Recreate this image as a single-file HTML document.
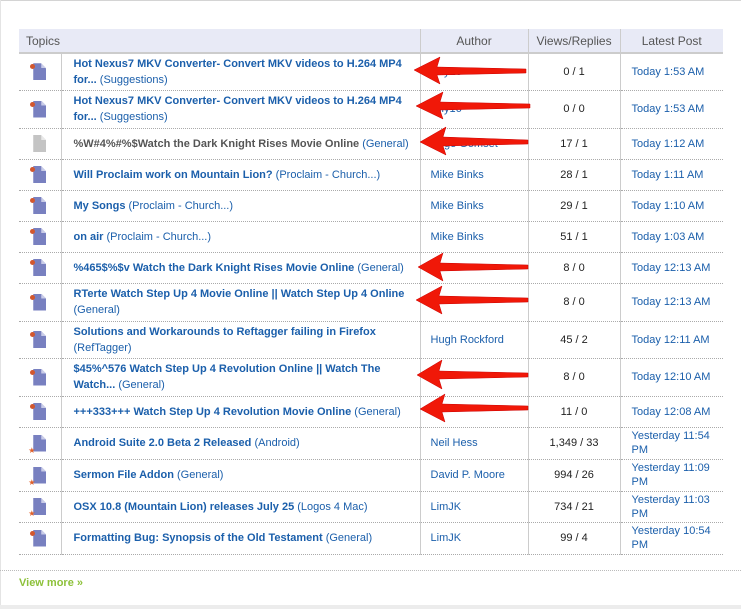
<!DOCTYPE html>
<html><head><style>
body{margin:0;background:#fff;font-family:"Liberation Sans",Arial,sans-serif;font-size:11px;width:741px;height:609px;position:relative;overflow:hidden}
.top{position:absolute;left:0;top:0;width:741px;height:1px;background:#d4d4d4}
.lft{position:absolute;left:0;top:0;width:1px;height:609px;background:#e4e4e4}
.bot{position:absolute;left:0;top:605px;width:741px;height:4px;background:#ececec}
table{position:absolute;left:19px;top:29px;border-collapse:collapse;width:704px;table-layout:fixed}
th{background:#e8eaf6;color:#555;font-weight:normal;font-size:12px;height:23px;border-left:1px solid #ccc;border-bottom:2px solid #ccc;padding:0}
td{border-bottom:1px dotted #aaa;padding:0;vertical-align:middle}
td.i{text-align:center;border-right:1px solid #ccc}
td.t{padding-left:12px;line-height:16px;color:#1b5fab;white-space:nowrap;overflow:hidden}
td.t b{color:#1b5fab}
td.a{padding-left:10px;color:#1b5fab;border-left:1px solid #ccc}
td.v{text-align:center;color:#222;border-left:1px solid #ccc;border-right:1px solid #ccc}
td.l{padding-left:11px;color:#1b5fab;line-height:14px}
.ic{display:inline-block;position:relative;width:13px;height:17px;vertical-align:middle}
.ic i{position:absolute;left:0;top:0;width:13px;height:17px;background:#7880c0;clip-path:polygon(0 0,60% 0,100% 32%,100% 100%,0 100%)}
.ic u{position:absolute;left:8px;top:0;width:5px;height:5px;background:#c9cce8;clip-path:polygon(0 0,100% 100%,0 100%)}
.ic.g i{background:#c4c4c4}
.ic.g u{background:#e8e8e8}
.ic .d{position:absolute;left:-3px;top:1px;width:5px;height:5px;border-radius:50%;background:#d2572e}
.ic .s{position:absolute;left:-5px;bottom:-3px;color:#e0602a;font-size:8px;line-height:8px}
.vm{position:absolute;left:19px;top:577px;color:#8dc13a;font-weight:bold;font-size:11px}
.dl{position:absolute;left:0;top:570px;width:741px;border-top:1px dotted #bbb}
svg{position:absolute;left:0;top:0}
</style></head><body>
<div class="top"></div><div class="lft"></div>
<table>
<colgroup><col style="width:42px"><col style="width:359px"><col style="width:108px"><col style="width:92px"><col style="width:103px"></colgroup>
<tr><th colspan="2" style="text-align:left;padding-left:7px;border-left:none">Topics</th><th>Author</th><th>Views/Replies</th><th>Latest Post</th></tr>
<tr style="height:37px"><td class="i"><span class="ic"><i></i><u></u><span class="d"></span></span></td><td class="t"><b>Hot Nexus7 MKV Converter- Convert MKV videos to H.264 MP4<br>for...</b> (Suggestions)</td><td class="a">Lilly16</td><td class="v">0 / 1</td><td class="l">Today 1:53 AM</td></tr>
<tr style="height:38px"><td class="i"><span class="ic"><i></i><u></u><span class="d"></span></span></td><td class="t"><b>Hot Nexus7 MKV Converter- Convert MKV videos to H.264 MP4<br>for...</b> (Suggestions)</td><td class="a">Lilly16</td><td class="v">0 / 0</td><td class="l">Today 1:53 AM</td></tr>
<tr style="height:31px"><td class="i"><span class="ic g"><i></i><u></u></span></td><td class="t"><b style="color:#555">%W#4%#%$Watch the Dark Knight Rises Movie Online</b> (General)</td><td class="a">Ange Gomset</td><td class="v">17 / 1</td><td class="l">Today 1:12 AM</td></tr>
<tr style="height:31px"><td class="i"><span class="ic"><i></i><u></u><span class="d"></span></span></td><td class="t"><b>Will Proclaim work on Mountain Lion?</b> (Proclaim - Church...)</td><td class="a">Mike Binks</td><td class="v">28 / 1</td><td class="l">Today 1:11 AM</td></tr>
<tr style="height:31px"><td class="i"><span class="ic"><i></i><u></u><span class="d"></span></span></td><td class="t"><b>My Songs</b> (Proclaim - Church...)</td><td class="a">Mike Binks</td><td class="v">29 / 1</td><td class="l">Today 1:10 AM</td></tr>
<tr style="height:31px"><td class="i"><span class="ic"><i></i><u></u><span class="d"></span></span></td><td class="t"><b>on air</b> (Proclaim - Church...)</td><td class="a">Mike Binks</td><td class="v">51 / 1</td><td class="l">Today 1:03 AM</td></tr>
<tr style="height:31px"><td class="i"><span class="ic"><i></i><u></u><span class="d"></span></span></td><td class="t"><b>%465$%$v Watch the Dark Knight Rises Movie Online</b> (General)</td><td class="a"></td><td class="v">8 / 0</td><td class="l">Today 12:13 AM</td></tr>
<tr style="height:38px"><td class="i"><span class="ic"><i></i><u></u><span class="d"></span></span></td><td class="t"><b>RTerte Watch Step Up 4 Movie Online || Watch Step Up 4 Online</b><br>(General)</td><td class="a"></td><td class="v">8 / 0</td><td class="l">Today 12:13 AM</td></tr>
<tr style="height:37px"><td class="i"><span class="ic"><i></i><u></u><span class="d"></span></span></td><td class="t"><b>Solutions and Workarounds to Reftagger failing in Firefox</b><br>(RefTagger)</td><td class="a">Hugh Rockford</td><td class="v">45 / 2</td><td class="l">Today 12:11 AM</td></tr>
<tr style="height:38px"><td class="i"><span class="ic"><i></i><u></u><span class="d"></span></span></td><td class="t"><b>$45%^576 Watch Step Up 4 Revolution Online || Watch The<br>Watch...</b> (General)</td><td class="a"></td><td class="v">8 / 0</td><td class="l">Today 12:10 AM</td></tr>
<tr style="height:31px"><td class="i"><span class="ic"><i></i><u></u><span class="d"></span></span></td><td class="t"><b>+++333+++ Watch Step Up 4 Revolution Movie Online</b> (General)</td><td class="a"></td><td class="v">11 / 0</td><td class="l">Today 12:08 AM</td></tr>
<tr style="height:32px"><td class="i"><span class="ic"><i></i><u></u><span class="s">★</span></span></td><td class="t"><b>Android Suite 2.0 Beta 2 Released</b> (Android)</td><td class="a">Neil Hess</td><td class="v">1,349 / 33</td><td class="l">Yesterday 11:54 PM</td></tr>
<tr style="height:32px"><td class="i"><span class="ic"><i></i><u></u><span class="s">★</span></span></td><td class="t"><b>Sermon File Addon</b> (General)</td><td class="a">David P. Moore</td><td class="v">994 / 26</td><td class="l">Yesterday 11:09 PM</td></tr>
<tr style="height:31px"><td class="i"><span class="ic"><i></i><u></u><span class="s">★</span></span></td><td class="t"><b>OSX 10.8 (Mountain Lion) releases July 25</b> (Logos 4 Mac)</td><td class="a">LimJK</td><td class="v">734 / 21</td><td class="l">Yesterday 11:03 PM</td></tr>
<tr style="height:32px"><td class="i"><span class="ic"><i></i><u></u><span class="d"></span></span></td><td class="t"><b>Formatting Bug: Synopsis of the Old Testament</b> (General)</td><td class="a">LimJK</td><td class="v">99 / 4</td><td class="l">Yesterday 10:54 PM</td></tr>
</table>
<div class="dl"></div>
<div class="vm">View more »</div>
<div class="bot"></div>
<svg width="741" height="609">
<g fill="#f01808" stroke="#c00" stroke-width="0.5">
<polygon points="414,70 440,57 437,67 526,69 526,73 437,75 440,84"/>
<polygon points="416,106 443,92 440,102 530,104 530,108 440,110 443,119"/>
<polygon points="420,142 446,127 443,137 528,140 528,144 443,146 446,155"/>
<polygon points="418,267 443,253 440,263 528,265 528,269 440,271 443,281"/>
<polygon points="416,300 442,286 439,296 528,298 528,302 439,304 442,314"/>
<polygon points="417,375 442,360 439,371 528,373 528,377 439,379 442,389"/>
<polygon points="420,409 445,394 442,404 528,406 528,410 442,412 445,422"/>
</g></svg>
</body></html>
